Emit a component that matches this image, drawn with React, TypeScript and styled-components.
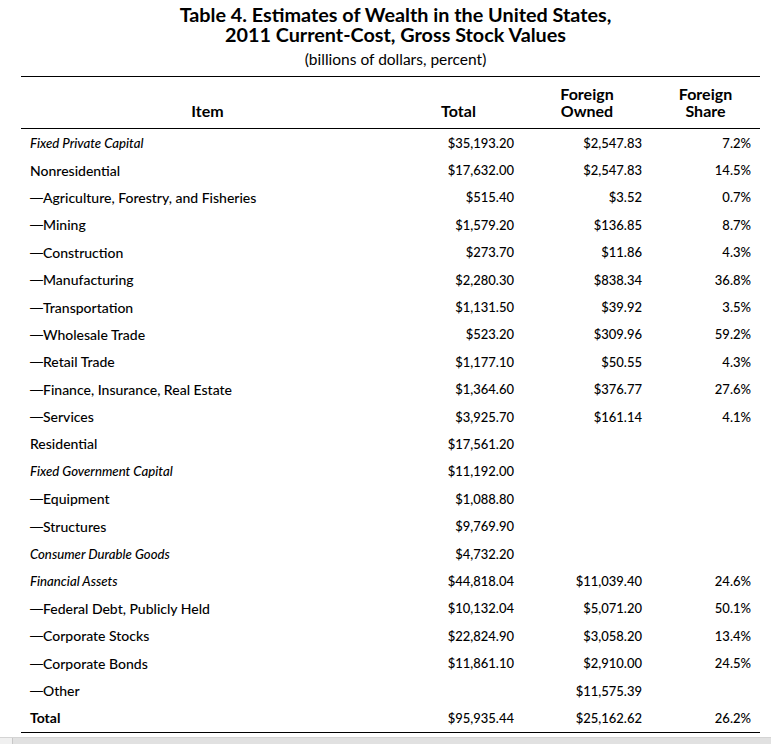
import React from "react";
import styled, { createGlobalStyle } from "styled-components";

const Global = createGlobalStyle`
  html, body { margin: 0; padding: 0; background: #fff; }
  body { font-family: "Lato", "Noto Sans", sans-serif; color: #000; }
`;

const Page = styled.div`
  width: 771px;
  height: 744px;
  display: flex;
  flex-direction: column;
  overflow: hidden;
`;

const Content = styled.div`
  flex: 1;
  padding: 4px 11px 0 21px;
`;

const Title = styled.h1`
  margin: 0;
  text-align: center;
  font-size: 19.8px;
  line-height: 20px;
  font-weight: 700;
  padding-left: 10px;
`;

const Subtitle = styled.div`
  margin-top: 5px;
  text-align: center;
  font-size: 15.5px;
  line-height: 20px;
  padding-left: 10px;
`;

const Table = styled.div`
  margin-top: 7px;
  border-top: 1.5px solid #000;
  border-bottom: 1.5px solid #000;
  display: grid;
  grid-template-columns: 373px 129px 128px 109px;
`;

const HeadCell = styled.div`
  height: 52px;
  border-bottom: 1.5px solid #000;
  display: flex;
  align-items: flex-end;
  justify-content: center;
  text-align: center;
  font-weight: 700;
  font-size: 16px;
  line-height: 17px;
  padding-bottom: 9px;
  box-sizing: border-box;
`;

const Cell = styled.div<{ $num?: boolean; $italic?: boolean; $bold?: boolean }>`
  height: 27.4px;
  display: flex;
  align-items: center;
  justify-content: ${(p) => (p.$num ? "flex-end" : "flex-start")};
  padding: ${(p) => (p.$num ? "0 9px 0 0" : "0 0 0 9px")};
  font-size: ${(p) => (p.$num ? "13px" : p.$italic ? "13.2px" : "14px")};
  font-style: ${(p) => (p.$italic ? "italic" : "normal")};
  font-weight: ${(p) => (p.$bold ? 700 : 500)};
  white-space: nowrap;
`;

const Dash = styled.span`
  font-family: "Liberation Sans", sans-serif;
  font-size: 13px;
`;

const ScrollBar = styled.div`
  height: 6px;
  background: #e1e1e1;
  border-top: 1px solid #d4d4d4;
  display: flex;
`;

const ScrollThumb = styled.div`
  width: 12px;
  height: 6px;
  background: #f0f0f0;
  border-right: 1px solid #c8c8c8;
`;

type Row = {
  item: string;
  sub?: boolean;
  total?: string;
  owned?: string;
  share?: string;
  italic?: boolean;
  bold?: boolean;
};

const rows: Row[] = [
  { item: "Fixed Private Capital", total: "$35,193.20", owned: "$2,547.83", share: "7.2%", italic: true },
  { item: "Nonresidential", total: "$17,632.00", owned: "$2,547.83", share: "14.5%" },
  { item: "Agriculture, Forestry, and Fisheries", sub: true, total: "$515.40", owned: "$3.52", share: "0.7%" },
  { item: "Mining", sub: true, total: "$1,579.20", owned: "$136.85", share: "8.7%" },
  { item: "Construction", sub: true, total: "$273.70", owned: "$11.86", share: "4.3%" },
  { item: "Manufacturing", sub: true, total: "$2,280.30", owned: "$838.34", share: "36.8%" },
  { item: "Transportation", sub: true, total: "$1,131.50", owned: "$39.92", share: "3.5%" },
  { item: "Wholesale Trade", sub: true, total: "$523.20", owned: "$309.96", share: "59.2%" },
  { item: "Retail Trade", sub: true, total: "$1,177.10", owned: "$50.55", share: "4.3%" },
  { item: "Finance, Insurance, Real Estate", sub: true, total: "$1,364.60", owned: "$376.77", share: "27.6%" },
  { item: "Services", sub: true, total: "$3,925.70", owned: "$161.14", share: "4.1%" },
  { item: "Residential", total: "$17,561.20" },
  { item: "Fixed Government Capital", total: "$11,192.00", italic: true },
  { item: "Equipment", sub: true, total: "$1,088.80" },
  { item: "Structures", sub: true, total: "$9,769.90" },
  { item: "Consumer Durable Goods", total: "$4,732.20", italic: true },
  { item: "Financial Assets", total: "$44,818.04", owned: "$11,039.40", share: "24.6%", italic: true },
  { item: "Federal Debt, Publicly Held", sub: true, total: "$10,132.04", owned: "$5,071.20", share: "50.1%" },
  { item: "Corporate Stocks", sub: true, total: "$22,824.90", owned: "$3,058.20", share: "13.4%" },
  { item: "Corporate Bonds", sub: true, total: "$11,861.10", owned: "$2,910.00", share: "24.5%" },
  { item: "Other", sub: true, owned: "$11,575.39" },
  { item: "Total", total: "$95,935.44", owned: "$25,162.62", share: "26.2%", bold: true },
];

export default function App() {
  return (
    <Page>
      <Global />
      <Content>
        <Title>
          Table 4. Estimates of Wealth in the United States,
          <br />
          2011 Current-Cost, Gross Stock Values
        </Title>
        <Subtitle>(billions of dollars, percent)</Subtitle>
        <Table>
          <HeadCell>Item</HeadCell>
          <HeadCell>Total</HeadCell>
          <HeadCell>
            Foreign
            <br />
            Owned
          </HeadCell>
          <HeadCell>
            Foreign
            <br />
            Share
          </HeadCell>
          {rows.map((r) => (
            <React.Fragment key={r.item}>
              <Cell $italic={r.italic} $bold={r.bold}>
                {r.sub && <Dash>—</Dash>}
                {r.item}
              </Cell>
              <Cell $num>{r.total ?? ""}</Cell>
              <Cell $num>{r.owned ?? ""}</Cell>
              <Cell $num>{r.share ?? ""}</Cell>
            </React.Fragment>
          ))}
        </Table>
      </Content>
      <ScrollBar>
        <ScrollThumb />
      </ScrollBar>
    </Page>
  );
}
